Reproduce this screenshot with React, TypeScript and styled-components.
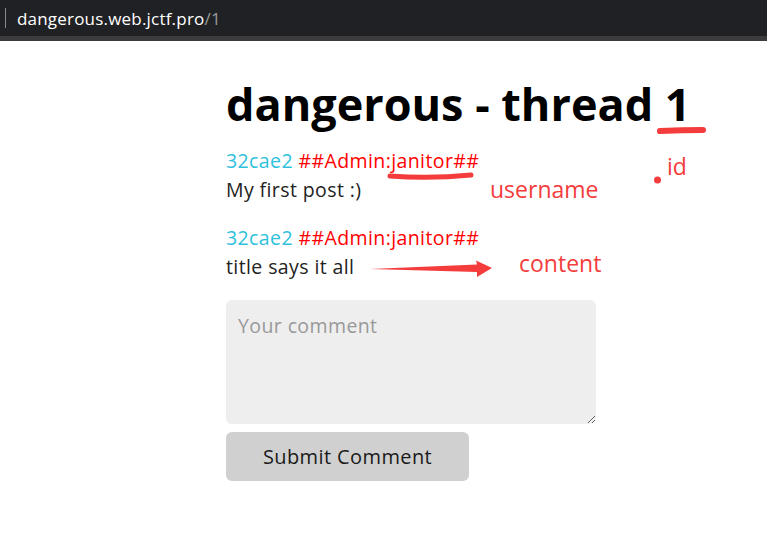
import React from "react";
import styled, { createGlobalStyle } from "styled-components";

const Global = createGlobalStyle`
  html, body { margin: 0; padding: 0; background: #fff; }
  body { font-family: "Open Sans", "Noto Sans", sans-serif; }
  * { box-sizing: border-box; }
`;

const Page = styled.div`
  position: relative;
  width: 767px;
  height: 545px;
  overflow: hidden;
  background: #fff;
`;

const AddressBar = styled.div`
  height: 41px;
  background: #202124;
  border-bottom: 5px solid #3b3b3d;
  display: flex;
  align-items: center;
  padding-left: 5px;
  font-family: "Open Sans", sans-serif;
  font-size: 17px;
  letter-spacing: 0.2px;
  color: #fff;
  gap: 11px;
`;

const Caret = styled.span`
  width: 1px;
  height: 20px;
  background: #8a8a8a;
`;

const Path = styled.span`
  color: #9a9a9a;
`;

const Main = styled.main`
  padding-left: 226px;
  padding-top: 33px;
`;

const Title = styled.h1`
  margin: 0 0 12px 0;
  font-size: 45px;
  line-height: 60px;
  font-weight: 700;
  color: #000;
  white-space: nowrap;
`;

const Post = styled.div`
  margin-bottom: 19px;
  font-size: 19.5px;
  letter-spacing: 0.4px;
  line-height: 29px;
  color: #222;
`;

const Hash = styled.span`
  color: #2fc1dc;
`;

const User = styled.span`
  color: #ff0000;
`;

const Comment = styled.textarea`
  display: block;
  width: 370px;
  height: 124px;
  margin-top: 8px;
  border: none;
  border-radius: 6px;
  background: #eeeeee;
  padding: 12px 12px;
  font-family: inherit;
  font-size: 19.5px;
  letter-spacing: 0.4px;
  color: #222;
  resize: vertical;
  &::placeholder { color: #999; }
`;

const Submit = styled.button`
  display: block;
  margin-top: 8px;
  width: 243px;
  height: 49px;
  border: none;
  border-radius: 6px;
  background: #d0d0d0;
  font-family: inherit;
  font-size: 20px;
  letter-spacing: 0.4px;
  color: #1a1a1a;
`;

const Overlay = styled.svg`
  position: absolute;
  left: 0;
  top: 0;
  pointer-events: none;
`;

const Note = styled.span<{ $x: number; $y: number }>`
  position: absolute;
  left: ${(p) => p.$x}px;
  top: ${(p) => p.$y}px;
  font-family: "Open Sans", sans-serif;
  font-size: 23px;
  line-height: 1;
  color: #f43c3c;
`;

const posts = [
  { hash: "32cae2", user: "##Admin:janitor##", body: "My first post :)" },
  { hash: "32cae2", user: "##Admin:janitor##", body: "title says it all" },
];

export default function App() {
  return (
    <Page>
      <Global />
      <AddressBar>
        <Caret />
        <span>
          dangerous.web.jctf.pro<Path>/1</Path>
        </span>
      </AddressBar>
      <Main>
        <Title>dangerous - thread 1</Title>
        {posts.map((p, i) => (
          <Post key={i}>
            <div>
              <Hash>{p.hash}</Hash> <User>{p.user}</User>
            </div>
            <div>{p.body}</div>
          </Post>
        ))}
        <Comment placeholder="Your comment" />
        <Submit>Submit Comment</Submit>
      </Main>
      <Overlay width="767" height="545" viewBox="0 0 767 545">
        <path d="M660 131 Q682 130 703 130" stroke="#f43c3c" strokeWidth="6" strokeLinecap="round" fill="none" />
        <path d="M390 176 Q430 179 471 175" stroke="#f43c3c" strokeWidth="5" strokeLinecap="round" fill="none" />
        <circle cx="657.5" cy="180" r="3.5" fill="#f43c3c" />
        <path d="M370 269 L477 264.5 L476 260.5 L492 268 L477 277 L477 272 Z" fill="#f43c3c" />
      </Overlay>
      <Note $x={667} $y={155}>id</Note>
      <Note $x={490} $y={178}>username</Note>
      <Note $x={519} $y={252}>content</Note>
    </Page>
  );
}
